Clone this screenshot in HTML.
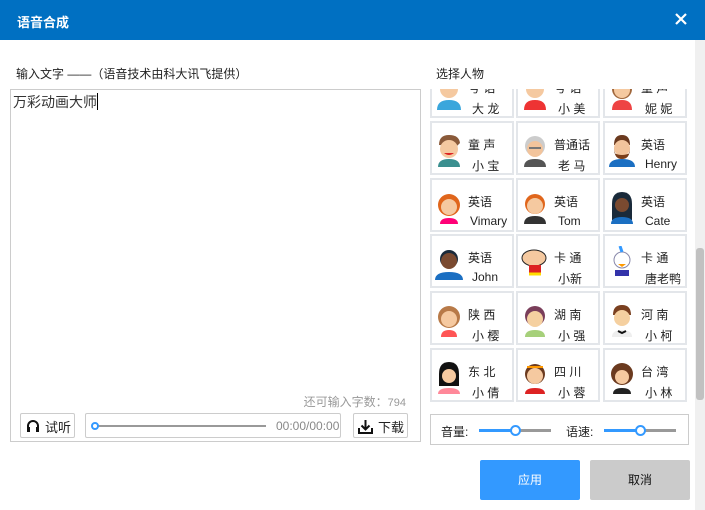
<!DOCTYPE html>
<html><head><meta charset="utf-8"><style>
*{margin:0;padding:0;box-sizing:border-box}
body{width:705px;height:510px;background:#fff;position:relative;overflow:hidden;font-family:"Liberation Sans","Noto Sans CJK SC",sans-serif;font-size:12px;color:#222}
.hd{position:absolute;left:0;top:0;width:705px;height:40px;background:#0070c2}
.hd .t{position:absolute;left:17px;top:12px;color:#fff;font-weight:bold;font-size:13px}
.hd .x{position:absolute;left:672px;top:10px}
.lbl{position:absolute;font-size:12px;color:#222}
.ta{position:absolute;left:10px;top:89px;width:411px;height:353px;border:1px solid #ccc}
.ta .txt{position:absolute;left:2px;top:2px;font-size:14px;color:#333}
.cur{display:inline-block;width:1px;height:17px;background:#000;vertical-align:-3px}
.btn{position:absolute;border:1px solid #ccc;border-radius:2px;background:#fff;font-size:13px}
.grid{position:absolute;left:428px;top:89px;width:265px;height:313px;overflow:hidden}
.c{position:absolute;width:84px;height:54px;border:2px solid #e3e6ea;background:#fff}
.c svg{position:absolute;left:2px;top:10px}
.c .a{position:absolute;left:36px;top:13px;font-size:12px;letter-spacing:0}
.c .b{position:absolute;left:40px;top:34px;font-size:12px}
.sb{position:absolute;left:695px;top:40px;width:10px;height:470px;background:#f0f0f0}
.sb i{position:absolute;left:1px;top:208px;width:8px;height:152px;background:#c1c1c1;border-radius:3px}
.vol{position:absolute;left:430px;top:414px;width:259px;height:31px;border:1px solid #ccc}
</style></head><body>
<div class="hd"><span class="t">语音合成</span>
<svg class="x" width="18" height="18" viewBox="0 0 18 18"><path d="M4 4L14 14M14 4L4 14" stroke="#fff" stroke-width="2.2"/></svg></div>
<div class="lbl" style="left:16px;top:65px">输入文字 ——（语音技术由科大讯飞提供）</div>
<div class="lbl" style="left:436px;top:65px">选择人物</div>
<div class="ta"><div class="txt">万彩动画大师<span class="cur"></span></div>
<div style="position:absolute;right:14px;top:303px;color:#999;font-size:12px">还可输入字数：<span style="font-size:11px">794</span></div></div>
<div class="btn" style="left:20px;top:413px;width:55px;height:25px"><svg style="position:absolute;left:5px;top:5px" width="14" height="14" viewBox="0 0 14 14"><path d="M2 11V7a5 5 0 0 1 10 0v4" fill="none" stroke="#111" stroke-width="2"/><rect x="1" y="8" width="3" height="5" fill="#111"/><rect x="10" y="8" width="3" height="5" fill="#111"/></svg><span style="position:absolute;left:24px;top:3px">试听</span></div>
<div class="btn" style="left:85px;top:413px;width:256px;height:25px"><div style="position:absolute;left:9px;top:11px;width:171px;height:2px;background:#999"></div><div style="position:absolute;left:5px;top:8px;width:8px;height:8px;border:2px solid #3399ff;border-radius:50%;background:#fff"></div><span style="position:absolute;left:190px;top:5px;color:#888;font-size:12px">00:00/00:00</span></div>
<div class="btn" style="left:353px;top:413px;width:55px;height:25px"><svg style="position:absolute;left:4px;top:5px" width="15" height="15" viewBox="0 0 15 15"><path d="M7.5 1v9M3.5 6.5l4 4 4-4" fill="none" stroke="#111" stroke-width="2"/><path d="M1 9v5h13V9" fill="none" stroke="#111" stroke-width="2"/></svg><span style="position:absolute;left:24px;top:3px">下载</span></div>

<div class="grid">
<div class="c" style="left:2px;top:-25px"><svg width="30" height="34"><circle cx="15" cy="13" r="9" fill="#f5c9a0"/><path d="M3 34q0-10 12-10t12 10z" fill="#3aa6dc"/></svg><span class="a">号 话</span><span class="b">大 龙</span></div>
<div class="c" style="left:88px;top:-25px"><svg width="30" height="34"><circle cx="15" cy="13" r="9" fill="#f5c9a0"/><path d="M4 34q0-10 11-10t11 10z" fill="#e33"/></svg><span class="a">号 话</span><span class="b">小 美</span></div>
<div class="c" style="left:175px;top:-25px"><svg width="30" height="34"><circle cx="15" cy="13" r="10" fill="#a0673c"/><circle cx="15" cy="14" r="8" fill="#f5c9a0"/><path d="M5 34q0-10 10-10t10 10z" fill="#e44"/></svg><span class="a">童 声</span><span class="b">妮 妮</span></div>
<div class="c" style="left:2px;top:32px"><svg width="30" height="34"><path d="M5 12q0-10 10-10t11 8l-3 3z" fill="#8a5a3a"/><circle cx="15" cy="16" r="9" fill="#f5c9a0"/><path d="M10 20q5 4 10 0" fill="#d22"/><path d="M4 34q0-8 11-8t11 8z" fill="#3a8f8f"/></svg><span class="a">童 声</span><span class="b">小 宝</span></div>
<div class="c" style="left:88px;top:32px"><svg width="30" height="34"><circle cx="15" cy="13" r="10" fill="#ccc"/><circle cx="15" cy="16" r="8" fill="#f2c49c"/><path d="M9 15h12" stroke="#777" stroke-width="2"/><path d="M4 34q0-8 11-8t11 8z" fill="#555"/></svg><span class="a">普通话</span><span class="b">老 马</span></div>
<div class="c" style="left:175px;top:32px"><svg width="30" height="34"><path d="M7 12q0-10 8-10t8 10z" fill="#6b3a1f"/><circle cx="15" cy="15" r="8" fill="#f2c49c"/><path d="M7 15q0 11 8 11t8-11v5q-8 4-16 0z" fill="#7a3e1a"/><path d="M2 34q0-8 13-8t13 8z" fill="#1b6fc2"/></svg><span class="a">英语</span><span class="b">Henry</span></div>
<div class="c" style="left:2px;top:89px"><svg width="30" height="34"><circle cx="15" cy="15" r="11" fill="#e0661c"/><circle cx="15" cy="17" r="8" fill="#f5c9a0"/><path d="M6 34q0-6 9-6t9 6z" fill="#f07"/></svg><span class="a">英语</span><span class="b" style="left:38px">Vimary</span></div>
<div class="c" style="left:88px;top:89px"><svg width="30" height="34"><circle cx="15" cy="14" r="10" fill="#e0661c"/><circle cx="15" cy="16" r="8" fill="#f5c9a0"/><path d="M4 34q0-8 11-8t11 8z" fill="#333"/></svg><span class="a">英语</span><span class="b">Tom</span></div>
<div class="c" style="left:175px;top:89px"><svg width="30" height="34"><path d="M5 30V14q0-12 10-12t10 12v16z" fill="#1a2a3a"/><circle cx="15" cy="15" r="7" fill="#7a4a30"/><path d="M4 34q0-7 11-7t11 7z" fill="#1b6fc2"/></svg><span class="a">英语</span><span class="b">Cate</span></div>
<div class="c" style="left:2px;top:145px"><svg width="30" height="34"><circle cx="15" cy="13" r="9" fill="#1a2a3a"/><circle cx="15" cy="15" r="8" fill="#7a4a30"/><path d="M1 34q0-8 14-8t14 8z" fill="#1b6fc2"/></svg><span class="a">英语</span><span class="b">John</span></div>
<div class="c" style="left:88px;top:145px"><svg width="30" height="34"><ellipse cx="14" cy="12" rx="12" ry="8" fill="#f5c9a0" stroke="#222"/><rect x="9" y="19" width="12" height="9" fill="#d22"/><path d="M9 28h12" stroke="#fd0" stroke-width="3"/></svg><span class="a">卡 通</span><span class="b">小新</span></div>
<div class="c" style="left:175px;top:145px"><svg width="30" height="34"><circle cx="15" cy="14" r="8" fill="#fff" stroke="#88a"/><path d="M13 0l2 6" stroke="#39f" stroke-width="3"/><path d="M11 18h8l-4 3z" fill="#f90"/><path d="M8 24h14v6H8z" fill="#33a"/></svg><span class="a">卡 通</span><span class="b">唐老鸭</span></div>
<div class="c" style="left:2px;top:202px"><svg width="30" height="34"><circle cx="15" cy="14" r="11" fill="#b87a48"/><circle cx="15" cy="16" r="8" fill="#f5c9a0"/><path d="M7 34q0-7 8-7t8 7z" fill="#f55"/></svg><span class="a">陕 西</span><span class="b">小 樱</span></div>
<div class="c" style="left:88px;top:202px"><svg width="30" height="34"><circle cx="15" cy="13" r="10" fill="#7a3e5a"/><circle cx="15" cy="16" r="8" fill="#f5d0a0"/><path d="M5 34q0-7 10-7t10 7z" fill="#a6d07a"/></svg><span class="a">湖 南</span><span class="b">小 强</span></div>
<div class="c" style="left:175px;top:202px"><svg width="30" height="34"><path d="M6 12q0-10 9-10t9 10z" fill="#7a4020"/><circle cx="15" cy="15" r="8" fill="#f5d0a0"/><path d="M5 34q0-7 10-7t10 7z" fill="#eee"/><path d="M11 28l4 2 4-2" stroke="#111" stroke-width="2" fill="none"/></svg><span class="a">河 南</span><span class="b">小 柯</span></div>
<div class="c" style="left:2px;top:259px"><svg width="30" height="34"><path d="M5 26V14q0-12 10-12t10 12v12z" fill="#111"/><circle cx="15" cy="16" r="7" fill="#f5c9a0"/><path d="M4 34q0-6 11-6t11 6z" fill="#f89"/></svg><span class="a">东 北</span><span class="b">小 倩</span></div>
<div class="c" style="left:88px;top:259px"><svg width="30" height="34"><circle cx="15" cy="14" r="10" fill="#6b3a1f"/><circle cx="15" cy="16" r="8" fill="#f5c9a0"/><path d="M7 7h16" stroke="#f90" stroke-width="2"/><path d="M5 34q0-6 10-6t10 6z" fill="#d22"/></svg><span class="a">四 川</span><span class="b">小 蓉</span></div>
<div class="c" style="left:175px;top:259px"><svg width="30" height="34"><circle cx="15" cy="14" r="11" fill="#6b3a1f"/><circle cx="15" cy="17" r="7" fill="#f5c9a0"/><path d="M6 34q0-6 9-6t9 6z" fill="#222"/></svg><span class="a">台 湾</span><span class="b">小 林</span></div>
</div>
<div class="sb"><i></i></div>

<div class="vol">
<span style="position:absolute;left:10px;top:8px;font-size:12px">音量:</span>
<div style="position:absolute;left:48px;top:14px;width:36px;height:3px;background:#3399ff"></div>
<div style="position:absolute;left:84px;top:14px;width:36px;height:3px;background:#999"></div>
<div style="position:absolute;left:79px;top:10px;width:11px;height:11px;border:2px solid #3399ff;border-radius:50%;background:#fff"></div>
<span style="position:absolute;left:135px;top:8px;font-size:12px">语速:</span>
<div style="position:absolute;left:173px;top:14px;width:36px;height:3px;background:#3399ff"></div>
<div style="position:absolute;left:209px;top:14px;width:36px;height:3px;background:#999"></div>
<div style="position:absolute;left:204px;top:10px;width:11px;height:11px;border:2px solid #3399ff;border-radius:50%;background:#fff"></div>
</div>
<div style="position:absolute;left:480px;top:460px;width:100px;height:40px;background:#3399ff;border-radius:2px;color:#fff;text-align:center;line-height:40px;font-size:12px">应用</div>
<div style="position:absolute;left:590px;top:460px;width:100px;height:40px;background:#cbcbcb;border-radius:2px;color:#111;text-align:center;line-height:40px;font-size:12px">取消</div>
</body></html>
